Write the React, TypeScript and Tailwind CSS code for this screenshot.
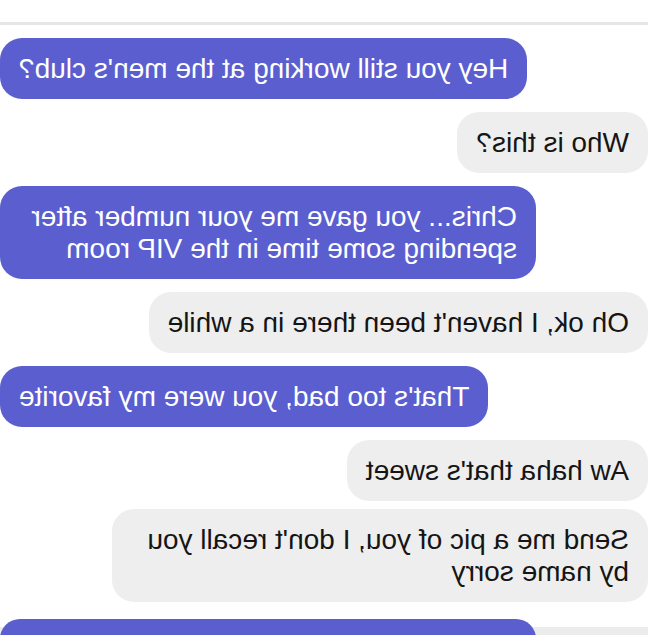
type Message = {
  id: number;
  fromMe: boolean;
  text: string;
};

const messages: Message[] = [
  { id: 1, fromMe: true, text: "Hey you still working at the men's club?" },
  { id: 2, fromMe: false, text: 'Who is this?' },
  { id: 3, fromMe: true, text: 'Chris... you gave me your number after spending some time in the VIP room' },
  { id: 4, fromMe: false, text: "Oh ok, I haven't been there in a while" },
  { id: 5, fromMe: true, text: "That's too bad, you were my favorite" },
  { id: 6, fromMe: false, text: "Aw haha that's sweet" },
  { id: 7, fromMe: false, text: "Send me a pic of you, I don't recall you by name sorry" },
];

function Bubble({ msg, gapTop }: { msg: Message; gapTop: string }) {
  return (
    <div className={`flex ${msg.fromMe ? 'justify-end' : 'justify-start'} ${gapTop}`}>
      <div
        className={`max-w-[536px] rounded-[22px] px-[19px] py-[14.5px] text-[28px] leading-[32px] ${
          msg.fromMe ? 'bg-[#5b5ecf] text-white' : 'bg-[#eeeeee] text-[#151515]'
        }`}
      >
        {msg.text}
      </div>
    </div>
  );
}

export default function App() {
  return (
    <div
      className="w-[648px] h-[635px] overflow-hidden bg-white -scale-x-100"
      style={{ fontFamily: '"Liberation Sans", Arial, sans-serif' }}
    >
      {/* top edge of the thread */}
      <div className="h-[22px] bg-white" />
      <div className="h-[3px] bg-[#e6e6e6]" />

      <div className="flex flex-col pt-[13px]">
        {messages.map((m, i) => {
          const prev = messages[i - 1];
          let gap = '';
          if (prev) gap = prev.fromMe === m.fromMe ? 'mt-[8px]' : 'mt-[13px]';
          return <Bubble key={m.id} msg={m} gapTop={gap} />;
        })}

        {/* next outgoing message, cut off by the screenshot */}
        <div className="mt-[17px] flex justify-end bg-[linear-gradient(to_bottom,white_8px,#ececec_8px)]">
          <div className="w-[536px] h-[40px] rounded-[22px] bg-[#5b5ecf]" />
        </div>
      </div>
    </div>
  );
}
